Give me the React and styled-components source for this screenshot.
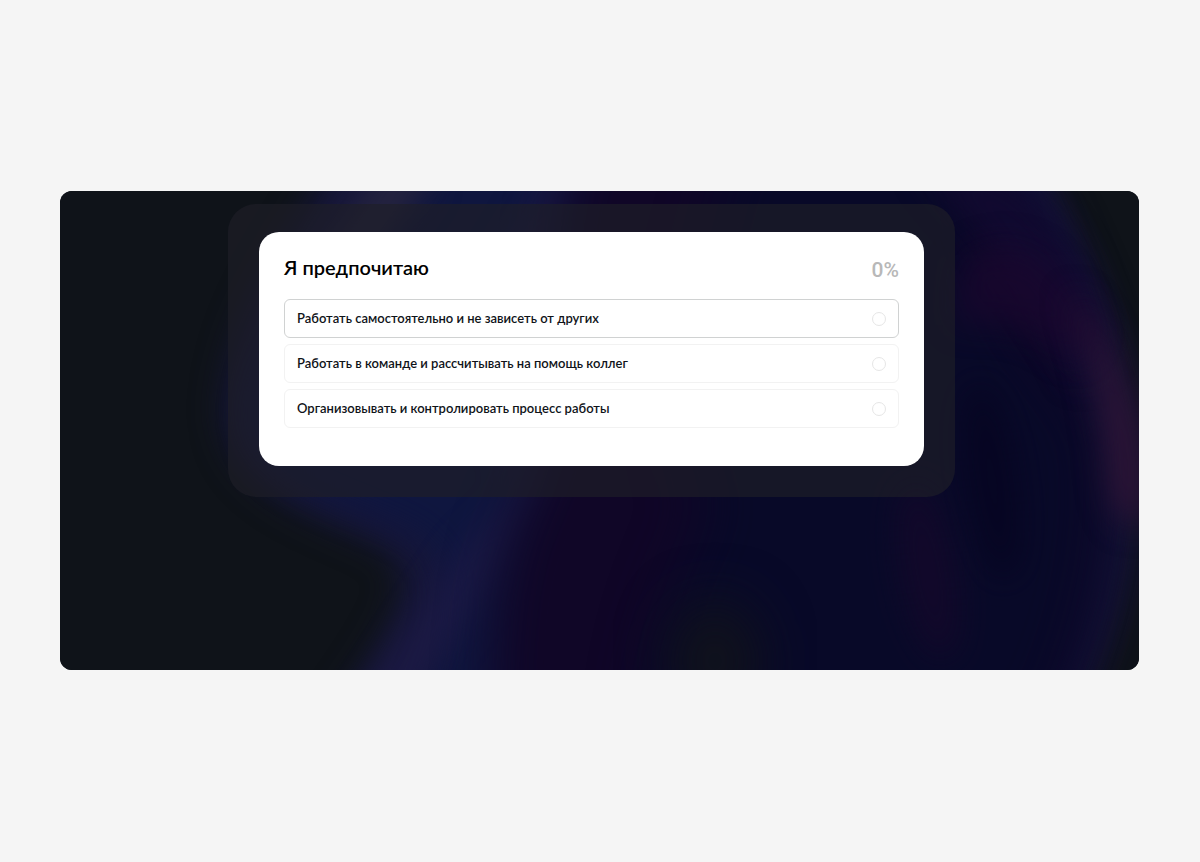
import React, { useState } from "react";
import styled, { createGlobalStyle } from "styled-components";

const OPTIONS = [
  { id: "solo", text: "Работать самостоятельно и не зависеть от других" },
  { id: "team", text: "Работать в команде и рассчитывать на помощь коллег" },
  { id: "lead", text: "Организовывать и контролировать процесс работы" },
];

const Backdrop = () => (
  <BackdropSvg viewBox="0 0 1079 479" preserveAspectRatio="none" aria-hidden="true">
    <defs>
      <filter id="soft" x="-60%" y="-60%" width="220%" height="220%" colorInterpolationFilters="sRGB">
        <feGaussianBlur stdDeviation="16" />
      </filter>
      <filter id="softer" x="-60%" y="-60%" width="220%" height="220%" colorInterpolationFilters="sRGB">
        <feGaussianBlur stdDeviation="26" />
      </filter>
    </defs>
    <rect width="1079" height="479" fill="#0f1319" />
    <path
      d="M290 -60C240 40 168 120 164 220C166 290 240 320 310 350C370 380 340 430 260 540H1010C1065 430 1085 360 1080 260C1070 150 1030 70 965 -60Z"
      fill="#16163a"
      filter="url(#soft)"
    />
    <path
      d="M410 -60C330 30 195 130 192 230C200 290 270 305 350 340C410 375 390 440 350 540H980C1040 430 1050 340 1045 250C1035 150 1000 60 950 -60Z"
      fill="#0f163f"
      filter="url(#soft)"
    />
    <path d="M345 -60L230 110L280 120L370 -10Z" fill="#24233f" filter="url(#soft)" />
    <path d="M500 -40L400 130L460 300L400 360L280 540L330 540L430 400L500 280L480 130L520 -20Z" fill="#201c4a" opacity="0.6" filter="url(#soft)" />
    <path
      d="M520 -60C480 80 500 230 475 290C435 360 430 430 430 540H990C1040 430 1060 330 1040 230C1020 120 980 30 930 -60Z"
      fill="#100627"
      filter="url(#softer)"
    />
    <path
      d="M680 -60C620 130 600 260 650 310C620 380 590 430 580 540H975C1035 430 1045 320 1035 250C1010 170 920 160 910 -60Z"
      fill="#080928"
      filter="url(#softer)"
    />
    <path d="M860 -30C960 -30 1020 40 1050 150L1020 190C990 110 920 50 860 -30Z" fill="#110a30" filter="url(#soft)" />
    <path d="M900 70C960 30 1000 70 1035 140L1015 170C970 130 930 130 895 135Z" fill="#1a072e" opacity="0.75" filter="url(#soft)" />
    <path d="M1010 100C1055 150 1090 230 1084 330C1058 340 1050 310 1048 260C1040 200 1030 150 1010 100Z" fill="#2f1436" filter="url(#soft)" />
    <ellipse cx="932" cy="290" rx="26" ry="100" fill="#060522" transform="rotate(-8 932 290)" filter="url(#soft)" />
    <ellipse cx="868" cy="380" rx="26" ry="90" fill="#12082a" transform="rotate(-10 868 380)" filter="url(#soft)" />
    <ellipse cx="655" cy="470" rx="46" ry="60" fill="#10121c" filter="url(#softer)" />
  </BackdropSvg>
);

const App = () => {
  const [answer, setAnswer] = useState("");

  return (
    <Page>
      <GlobalStyle />
      <Stage>
        <Backdrop />
        <Glass>
          <Card>
            <Header>
              <Title id="question">Я предпочитаю</Title>
              <Percent>0%</Percent>
            </Header>
            <Options role="radiogroup" aria-labelledby="question">
              {OPTIONS.map((option, index) => (
                <Option key={option.id} $active={index === 0}>
                  <OptionText>{option.text}</OptionText>
                  <Radio
                    type="radio"
                    name="answer"
                    value={option.id}
                    checked={answer === option.id}
                    onChange={() => setAnswer(option.id)}
                  />
                </Option>
              ))}
            </Options>
          </Card>
        </Glass>
      </Stage>
    </Page>
  );
};

const GlobalStyle = createGlobalStyle`
  * {
    box-sizing: border-box;
  }
  body {
    margin: 0;
    background-color: #f5f5f5;
    font-family: Lato, Roboto, "Liberation Sans", sans-serif;
  }
`;
const Page = styled.main`
  min-height: 100vh;
  display: flex;
  flex-direction: column;
  justify-content: center;
  padding: 0 61px 1px 60px;
`;
const Stage = styled.section`
  position: relative;
  overflow: hidden;
  border-radius: 12px;
  padding: 13px 184px 173px 168px;
  background-color: #0f1319;
`;
const BackdropSvg = styled.svg`
  position: absolute;
  inset: 0;
  width: 100%;
  height: 100%;
`;
const Glass = styled.div`
  position: relative;
  padding: 28px 31px 31px;
  border-radius: 28px;
  background-color: rgba(31, 31, 39, 0.66);
`;
const Card = styled.div`
  padding: 25px 25px 38px;
  border-radius: 20px;
  background-color: #fff;
`;
const Header = styled.header`
  display: flex;
  justify-content: space-between;
  align-items: flex-start;
  margin-bottom: 16px;
`;
const Title = styled.h1`
  margin: 0;
  color: #000;
  font-size: 20px;
  font-weight: 600;
  line-height: 20px;
`;
const Percent = styled.span`
  color: #b8b8b8;
  font-family: Roboto, sans-serif;
  font-size: 21px;
  font-weight: 500;
  line-height: 26px;
`;
const Options = styled.div`
  display: flex;
  flex-direction: column;
  gap: 6px;
`;
const Option = styled.label`
  display: flex;
  justify-content: space-between;
  align-items: center;
  min-height: 39px;
  padding: 6px 12px;
  border: 1px solid ${({ $active }) => ($active ? "#d0d2d2" : "#f2f2f2")};
  border-radius: 6px;
  color: #0f1319;
  cursor: pointer;
`;
const OptionText = styled.span`
  padding-bottom: 2px;
  font-size: 13px;
  font-weight: 600;
  line-height: 16px;
`;
const Radio = styled.input`
  appearance: none;
  flex: none;
  width: 14px;
  height: 14px;
  margin: 0;
  border: 1px solid #e6e6e6;
  border-radius: 50%;
  background-color: #fff;
  cursor: pointer;

  &:checked {
    border: 4px solid #0f1319;
  }
`;

export default App;
